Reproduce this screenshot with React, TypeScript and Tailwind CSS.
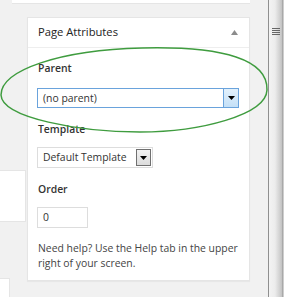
export default function App() {
  return (
    <div
      className="relative flex w-[284px] h-[297px] overflow-hidden bg-[#f1f1f1] text-[#444]"
      style={{ fontFamily: '"Open Sans", "Noto Sans", Arial, sans-serif' }}
    >
      <div className="relative flex-1">
        {/* bits of the editor column peeking in on the left */}
        <div className="absolute left-[12px] top-0 w-[238px] h-[4px] bg-white border-b border-[#e5e5e5]" />
        <div className="absolute left-0 top-[170px] w-[26px] h-[52px] bg-white border border-l-0 border-[#e5e5e5]" />
        <div className="absolute left-0 top-[278px] w-[10px] h-[30px] bg-white border border-l-0 border-[#e5e5e5]" />

        <div className="relative ml-[27px] mt-[17px] w-[223px] h-[264px] bg-white border border-[#e5e5e5] shadow-[0_1px_1px_rgba(0,0,0,0.04)]">
          <div className="flex h-[30px] items-center justify-between border-b border-[#eee] pl-[10px] pr-[11px]">
            <span className="text-[11.2px] text-[#222]">Page Attributes</span>
            <svg width="7" height="5" viewBox="0 0 7 5">
              <path d="M3.5 0 L7 5 L0 5 Z" fill="#8c8c8c" />
            </svg>
          </div>

          <div className="px-[9px]">
            <div className="mt-[10px] pl-px h-[20px] leading-[20px] text-[10.4px] font-semibold text-[#333]">Parent</div>
            <div className="mt-[10px] flex h-[20px] w-[202px] items-stretch border border-[#6aa3dc] bg-white">
              <span className="flex-1 pl-[5px] text-[10.4px] leading-[18px] text-[#333]">(no parent)</span>
              <span className="flex w-[15px] items-center justify-center border-l border-[#6aa3dc] bg-[linear-gradient(#e3f1fc,#c4e0f7)]">
                <svg width="7" height="4" viewBox="0 0 7 4">
                  <path d="M0 0 H7 L3.5 4 Z" fill="#000" />
                </svg>
              </span>
            </div>

            <div className="mt-[11px] pl-px h-[20px] leading-[20px] text-[10.4px] font-semibold text-[#333]">Template</div>
            <div className="mt-[8px] flex h-[21px] w-[116px] items-stretch border border-[#ddd] bg-white p-px">
              <span className="flex-1 pl-[4px] text-[10.4px] leading-[17px] text-[#333] whitespace-nowrap">Default Template</span>
              <span className="flex w-[15px] items-center justify-center border border-[#707070] bg-[linear-gradient(#f2f2f2,#dcdcdc)]">
                <svg width="7" height="4" viewBox="0 0 7 4">
                  <path d="M0 0 H7 L3.5 4 Z" fill="#000" />
                </svg>
              </span>
            </div>

            <div className="mt-[11px] pl-px h-[20px] leading-[20px] text-[10.4px] font-semibold text-[#333]">Order</div>
            <div className="mt-[8px] h-[21px] w-[51px] border border-[#ddd] bg-white pl-[5px] text-[10.4px] leading-[19px] text-[#333]">
              0
            </div>

            <p className="mt-[13px] pl-px text-[10.4px] leading-[15px] text-[#444]">
              Need help? Use the Help tab in the upper right of your screen.
            </p>
          </div>
        </div>

        {/* hand drawn green ellipse annotation */}
        <svg className="absolute left-0 top-0 pointer-events-none" width="270" height="297" viewBox="0 0 270 297">
          <path
            d="M 1 95 C 1 70, 60 50, 142 48 C 225 46, 268 60, 267 90 C 266 115, 200 132, 140 132 C 80 132, 2 118, 1 95 Z"
            fill="none"
            stroke="#3f9c3f"
            strokeWidth="1.5"
          />
        </svg>
      </div>

      {/* scrollbar */}
      <div className="relative w-[16px] h-full border-l border-[#8f8f8f] bg-[linear-gradient(to_right,#f3f3f3_0%,#ececec_40%,#d2d2d2_70%,#c4c4c4_85%,#a9a9a9_90%,#e0e0e0_100%)]">
        <div className="absolute left-[3px] top-[28px] flex w-[8px] flex-col gap-px">
          <div className="h-px bg-[#666]" />
          <div className="h-px bg-[#666]" />
          <div className="h-px bg-[#666]" />
          <div className="h-px bg-[#666]" />
        </div>
      </div>
    </div>
  );
}
